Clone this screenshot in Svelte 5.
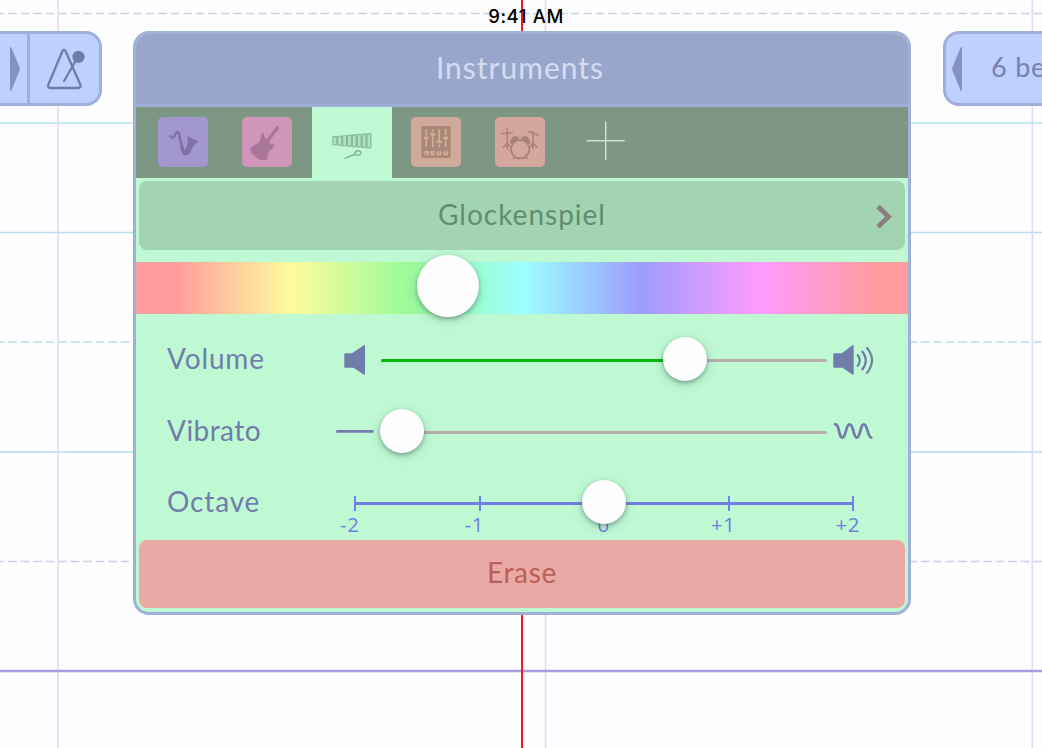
<script>
  const rowsSolid = [123, 232.5, 452];
  const rowsDashed = [13.5, 342, 561.5];
  const columns = [58, 545.5, 1032.3];
  const ticks = [0, 1, 2, 3, 4];
  const octaves = ['-2', '-1', '0', '+1', '+2'];
  const bars = [0, 1, 2, 3, 4, 5, 6, 7];
</script>

<main class="stage">
  <svg class="grid" width="1042" height="748" viewBox="0 0 1042 748" aria-hidden="true">
    {#each rowsSolid as y}
      <line x1="0" x2="1042" y1={y} y2={y} stroke="#b4dfec" stroke-width="1.4" />
    {/each}
    {#each rowsDashed as y}
      <line x1="8.3" x2="1042" y1={y} y2={y} stroke={y === 342 ? '#b9dde9' : '#c5d3e6'} stroke-width="1.4" stroke-dasharray="8.6 3.9" />
      <line x1="0" x2="4.3" y1={y} y2={y} stroke="#c5d3e6" stroke-width="1.4" />
    {/each}
    {#each columns as x}
      <line x1={x} x2={x} y1="0" y2="748" stroke="#dfd8f9" stroke-width="1.5" />
    {/each}
    <line x1="0" x2="1042" y1="671" y2="671" stroke="#a3a0df" stroke-width="2.7" />
  </svg>

  <div class="playhead"></div>
  <div class="clock">9:41 AM</div>

  <div class="layout">
    <div class="bar left">
      <div class="cell next">
        <svg width="12" height="46" viewBox="0 0 12 46"><path d="M1 1.5Q1.8.5 2.6 2L10.8 22Q11 23 10.8 24L2.6 44Q1.8 45.5 1 44.5Z" fill="#8492bd" /></svg>
      </div>
      <div class="cell metro">
        <svg width="40" height="46" viewBox="0 0 40 46" fill="none" stroke="#6c7da8" stroke-width="2.3" stroke-linecap="round" stroke-linejoin="round">
          <path d="M15.3 4.5Q17 1.2 18.7 4.5L33.3 37.5Q34 40.8 31.5 41H3Q.7 40.5 1.3 37.7Z" />
          <path d="M17 34L28 15" />
          <circle cx="31.5" cy="9.8" r="5" fill="#6c7da8" />
        </svg>
      </div>
    </div>

    <section class="panel">
      <header>Instruments</header>

      <nav class="tabs">
        <div class="tile sax">
          <svg viewBox="0 0 50 50" width="50" height="50">
            <path d="M12 19C13.5 22 16 20.8 17 18C18.5 14 20.6 14 21.3 17.5C22.2 22 23.2 31 25.7 35.5" fill="none" stroke="#8071a7" stroke-width="2.5" stroke-linecap="round" />
            <path d="M21 15L22.7 19L23.3 23L25 27L26.5 32Q27.3 34.3 28.3 30L29.8 25.7L29.3 19Q35.5 22 40.3 24.2Q40.7 25.2 38.5 26Q35.8 27.3 34 31.5Q31.6 38.5 27.5 38.5Q24 38.4 22.5 32Z" fill="#8071a7" />
          </svg>
        </div>
        <div class="tile guitar">
          <svg viewBox="0 0 50 50" width="50" height="50" fill="#a8789a">
            <path d="M33.8 10.2Q36.5 8 37 10.2L36.6 12.6L33.5 16L26.7 25.5L23.8 23.5L31 14Z" />
            <path d="M21.8 15.5C19.7 14.8 18.7 18 18.8 20.5C19 25 15.5 26.7 12 28.3C7 30.7 7.7 34.5 11.5 38C15 41.5 19 44.3 23 43C27 41.6 25.3 38.6 26.7 35.2C28 32 32 32.5 32.2 28C32.2 26 30.6 27.8 29 27.3C26.8 26.7 29 23.8 26 22.5C23 21.5 21.5 20 21.8 15.5Z" />
          </svg>
        </div>
        <div class="active">
          <svg viewBox="0 0 50 50" width="50" height="50" fill="none" stroke="#87b695" stroke-width="1.1">
            <path d="M6.5 20.7L44 18.3V29.5L6.5 26.7Z" fill="#9bcca9" stroke="none" />
            {#each bars as i}
              <rect x={5.9 + i * 4.87} y={19.6 - i * 0.42} width="3.9" height={8.2 + i * 0.87} rx=".5" fill="#aee4bf" />
            {/each}
            <path d="M17.5 41.5L28.5 37" stroke-width="1.5" />
            <ellipse cx="31" cy="36" rx="2.8" ry="2.2" stroke-width="1.5" transform="rotate(-12 31 36)" />
          </svg>
        </div>
        <div class="tile mixer">
          <svg viewBox="0 0 50 50" width="50" height="50">
            <rect x="10.3" y="9" width="29.4" height="32" rx="2.3" fill="#a98878" />
            <g stroke="#d4ab98" stroke-width="1.7">
              <path d="M15.3 12V30M21.7 12V30M28.2 12V30M34.7 12V30" />
              <path d="M12.8 20.9H17.8M19.2 17.2H24.2M25.7 24.8H30.7M32.2 20.9H37.2" stroke-width="2.6" />
            </g>
            <path d="M13.5 19H17M20 15.3H23.5M26.5 27H30M33 19H36.5" stroke="#a98878" stroke-width="1" />
            <g fill="#d4ab98"><circle cx="15.3" cy="36" r="2.6" /><circle cx="21.7" cy="36" r="2.6" /><circle cx="28.2" cy="36" r="2.6" /><circle cx="34.7" cy="36" r="2.6" /></g>
            <path d="M15.3 36L13.8 37.8M21.7 36H24.3M28.2 36V33.5M34.7 36V33.5" stroke="#a98878" stroke-width="1.2" />
          </svg>
        </div>
        <div class="tile drums">
          <svg viewBox="0 0 50 50" width="50" height="50" fill="none" stroke="#aa8278" stroke-width="1.6" stroke-linecap="round">
            <path d="M12.2 11V32M6.7 16.5L17.3 16M12.2 26L8.3 30.5M12.2 26L16 30.5" />
            <path d="M38 18V32M33.5 14.5L43.5 18.3M37.7 14.7L37.5 16M38 26L34.5 31M38 26L42 30.5" />
            <path d="M15.3 23.5L18 19.5Q20.5 17.8 24.3 21L22.5 23.3L17 27.3L14.8 26Z" fill="#aa8278" stroke="none" />
            <path d="M35 23.5L32.3 19.5Q29.8 17.8 26 21L28 23.3L33.3 27.3L35.5 26Z" fill="#aa8278" stroke="none" />
            <circle cx="25.2" cy="32.3" r="9.2" fill="#d3a79c" stroke-width="1.7" />
            <path d="M19.5 40.5L18.5 41.5M31 40.5L32 41.5" />
          </svg>
        </div>
        <svg class="add" viewBox="0 0 50 50" width="50" height="50"><path d="M6.7 23.8H44.7M25.7 4.6V43.3" stroke="#cfe3d1" stroke-width="1.4" /></svg>
      </nav>

      <div class="choice">
        <span>Glockenspiel</span>
        <svg viewBox="0 0 18 28" width="18" height="28"><path d="M3 3.5L13.5 13.7L3 23.9" fill="none" stroke="#887f7e" stroke-width="4.8" /></svg>
      </div>

      <div class="spectrum"><i class="knob big"></i></div>

      <div class="row">
        <span class="label wide">Volume</span>
        <svg class="icon" viewBox="0 0 40 36" width="40" height="36"><path d="M9.3 12Q9.3 11.3 10 11.3H17L28 3.7Q30 2.4 30 4V31.8Q30 33.5 28.3 32.3L18.5 25.7H10Q9.3 25.7 9.3 25Z" fill="#707dab" /></svg>
        <div class="track"><div class="fill" style:width="68.2%"></div><i class="knob" style:left="303.5px"></i></div>
        <svg class="icon" viewBox="0 0 46 36" width="46" height="36">
          <path d="M6.3 12Q6.3 11.3 7 11.3H15L24.7 3.7Q26.7 2.4 26.7 4V31.8Q26.7 33.5 25 32.3L15.5 25.7H7Q6.3 25.7 6.3 25Z" fill="#707dab" />
          <path d="M30.7 13Q34.9 18.4 30.7 23.8M35.3 9.5Q42.3 18.4 35.3 27.5M40 6Q50 18.4 40 30.8" fill="none" stroke="#707dab" stroke-width="2.1" stroke-linecap="round" />
        </svg>
      </div>

      <div class="row">
        <span class="label">Vibrato</span>
        <svg class="icon" viewBox="0 0 40 36" width="40" height="36"><path d="M1.3 17.3H38.5" stroke="#707dab" stroke-width="2.8" /></svg>
        <div class="track"><i class="knob" style:left="21px"></i></div>
        <svg class="icon" viewBox="0 0 46 36" width="46" height="36"><path d="M8.2 10.4Q10.3 10 11.5 15C13 21 13.3 23.5 15.5 23.5C19.2 23.5 18.5 10.3 22.7 10.3C26.8 10.3 26 23.5 29.7 23.5C33.8 23.5 33 10.3 36.7 10.3C41 10.3 40 22.5 44.2 23.5" fill="none" stroke="#707dab" stroke-width="2.8" stroke-linecap="round" /></svg>
      </div>

      <div class="row octave">
        <span class="label wide">Octave</span>
        <div class="scale">
          <div class="marks">{#each ticks as _}<b></b>{/each}</div>
          <div class="numbers">{#each octaves as n}<span class:zero={n === '0'}>{n}</span>{/each}</div>
          <i class="knob" style:left="249.5px"></i>
        </div>
      </div>

      <div class="erase">Erase</div>
    </section>

    <div class="bar right">
      <svg width="12" height="46" viewBox="0 0 12 46"><path d="M11 1.5Q10.2.5 9.4 2L1.2 22Q1 23 1.2 24L9.4 44Q10.2 45.5 11 44.5Z" fill="#8492bd" /></svg>
      <span>6 beats</span>
    </div>
  </div>
</main>

<style>
  :global(body) { margin: 0; background: #fefdff; }
  * { box-sizing: border-box; }
  svg { display: block; flex: none; }
  .stage { position: relative; width: 1042px; height: 748px; overflow: hidden; background: #fefdff; font-family: Lato, "Open Sans", sans-serif; font-size: 28px; }
  .grid { position: absolute; inset: 0; }
  .clock { position: absolute; top: 6px; left: 0; width: 1052px; text-align: center; font: 500 18.5px/20px Inter, sans-serif; color: #000; letter-spacing: .6px; }
  .playhead { position: absolute; left: 521px; top: 0; width: 2px; height: 748px; background: #f8171c; }
  .layout { position: relative; display: flex; align-items: flex-start; padding-top: 31.4px; width: 1202px; }
  .bar { height: 75px; border: 3px solid #9fafd9; background: #bdd0ff; display: flex; align-items: center; color: #7382af; }
  .left { width: 102px; border-left: 0; border-radius: 0 16px 16px 0; }
  .cell { height: 69px; display: flex; align-items: center; }
  .next { width: 30px; border-right: 3px solid #9fafd9; padding-left: 9px; }
  .metro { padding: 2px 0 0 17px; }
  .right { margin-left: 32px; width: 220px; border-radius: 16px; padding-left: 5px; }
  .right span { margin: -4px 0 0 28px; letter-spacing: .8px; white-space: nowrap; font-size: 27px; }

  .panel { width: 778px; height: 584px; margin-left: 31px; border: 3px solid #9fb0d9; border-radius: 16px; background: #bff9d3; overflow: hidden; display: flex; flex-direction: column; }
  header { height: 72.5px; flex: none; background: #99a6cc; border-bottom: 3px solid #9fafd7; color: #d5dbf1; text-align: center; line-height: 67px; font-size: 30px; letter-spacing: 1px; padding-right: 4px; }
  .tabs { height: 71px; flex: none; background: #7e9684; display: flex; align-items: center; gap: 34.33px; padding-left: 22px; }
  .tile { width: 50px; height: 50px; border-radius: 5px; flex: none; }
  .sax { background: #a298cf; }
  .guitar { background: #d096b9; }
  .mixer { background: #d0a99a; }
  .drums { background: #d3a79c; }
  .active { width: 80px; height: 71px; flex: none; margin: 0 -15px; background: #bff9d3; display: flex; align-items: center; justify-content: center; }
  .choice { height: 69px; flex: none; margin: 3px 3px 0; border-radius: 8px; background: #a2d4b1; color: #618c72; display: grid; grid-template-columns: 1fr auto 1fr; align-items: center; }
  .choice span { grid-column: 2; letter-spacing: 1px; margin-top: -3px; }
  .choice svg { justify-self: end; margin: 4px 12px 0 0; }
  .spectrum { position: relative; height: 52px; flex: none; margin-top: 12px; background: linear-gradient(90deg, #ff9c9d 38px, #fffb9d 154px, #9bfb98 271px, #9cffff 388px, #9d9cff 504px, #ff9bff 624px, #ff9c9d 740px); }
  .knob { position: absolute; top: -.2px; width: 44px; height: 44px; border-radius: 50%; background: #fefdff; transform: translate(-50%, -50%); box-shadow: 0 2px 4px rgba(40, 75, 60, .4), 0 3px 12px rgba(40, 75, 60, .18); }
  .big { left: 312px; top: 24px; width: 62px; height: 62px; }
  .row { height: 72px; flex: none; display: flex; align-items: center; padding: 0 33px 0 32px; color: #707dab; }
  .spectrum + .row { margin-top: 10.6px; }
  .label { width: 167px; letter-spacing: .45px; margin: -5px 1px 0 -1px; }
  .wide { letter-spacing: .85px; }
  .icon { align-self: center; }
  .track { position: relative; width: 446px; height: 3px; margin: 0 0 0 6px; background: #b7adae; border-radius: 2px; }
  .fill { height: 3px; background: #04b807; border-radius: 2px; }
  .scale { position: relative; width: 500px; height: 3px; margin-left: 19px; background: #7080e1; }
  .scale .knob { top: .5px; }
  .marks { display: flex; justify-content: space-between; margin-top: -6px; }
  .marks b { width: 2px; height: 15px; background: #7080ee; }
  .numbers { display: grid; grid-template-columns: repeat(5, 124.5px); margin: 1px 0 0 -66.5px; font: 20.5px/24px "Open Sans", sans-serif; letter-spacing: .6px; color: #707fe0; text-align: center; }
  .numbers .zero { padding-left: 10px; }
  .octave { height: 72px; align-items: flex-start; }
  .octave .label { margin-top: 15px; line-height: 36px; }
  .octave .scale { margin-top: 33.5px; }
  .erase { height: 68px; flex: none; margin: 0 3px; border-radius: 8px; background: #e9aaa5; color: #ba6059; text-align: center; line-height: 65px; letter-spacing: .7px; }
</style>
